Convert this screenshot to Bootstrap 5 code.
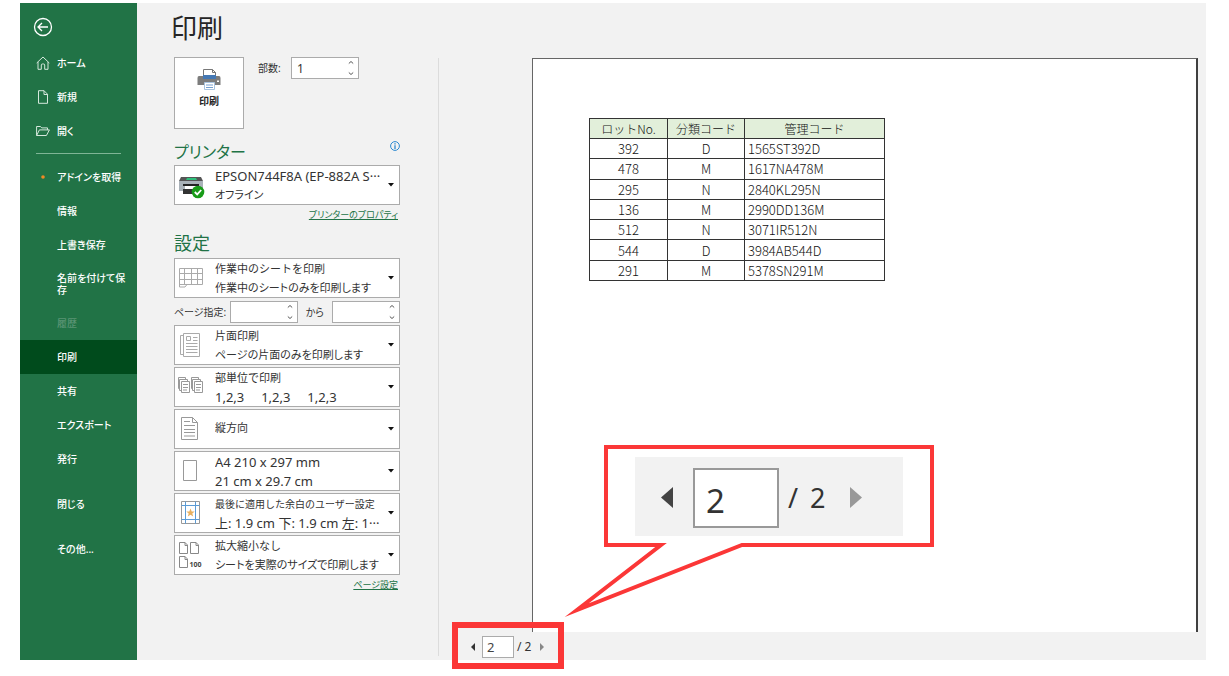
<!DOCTYPE html>
<html lang="ja">
<head>
<meta charset="utf-8">
<meta name="viewport" content="width=device-width, initial-scale=1">
<title>印刷</title>
<link href="https://cdn.jsdelivr.net/npm/bootstrap@5.3.0/dist/css/bootstrap.min.css" rel="stylesheet">
<style>
  :root { --xl-green: #217346; --xl-dark: #004b1c; --xl-pane: #f2f2f2; --xl-line: #ababab; --xl-red: #fb3737; }
  body { min-height: 100vh; padding: 3px 23px 16px 20px; background: #fff; color: #333; font-family: "Noto Sans", "Noto Sans CJK JP", sans-serif; font-size: 11px; line-height: 18px; font-feature-settings: "palt"; }
  .backstage { min-height: calc(100vh - 19px); background: var(--xl-pane); }

  /* left navigation */
  .side { flex: 0 0 117px; background: var(--xl-green); font-size: 10px; line-height: 12px; }
  .back { margin: 14px 0 9px 13px; width: 20px; height: 20px; line-height: 0; }
  .side .nav-link { display: flex; align-items: center; min-height: 34px; padding: 0 8px 0 37px; color: #fff; font-weight: 500; word-break: break-all; }
  .side .nav-link:hover, .side .nav-link.active { background: var(--xl-dark); }
  .side .nav-link.disabled { color: #5a9474; }
  .side .nav-link.has-icon { padding-left: 16px; white-space: nowrap; }
  .side .nav-link.has-icon svg { width: 14px; margin-right: 7px; flex: none; }
  .side .nav-link.two-line { min-height: 44px; }
  .side .apart { margin-top: 11px; }
  .side hr { margin: 5px 16px 6px; border-color: #7fb596; opacity: 1; }

  /* settings column */
  .settings { flex: 0 0 302px; padding: 7px 39px 0 37px; }
  .settings h1 { margin: 0 0 11px -3px; font-size: 26px; line-height: 36px; font-weight: 400; color: #262626; font-feature-settings: normal; }
  .settings h2 { margin: 0; padding-top: 6px; font-size: 18px; line-height: 24px; font-weight: 400; color: var(--xl-green); }
  .settings h2.kana { padding-top: 2px; font-size: 16px; line-height: 26px; }
  .print-btn { width: 70px; height: 72px; padding: 10px 0 0; background: #fff; border: 1px solid var(--xl-line); border-radius: 0; font-size: 10px; line-height: 18px; font-weight: 700; color: #262626; }
  .form-note { font-size: 10px; line-height: 22px; white-space: nowrap; }
  .copies-label { width: 33px; margin-left: 14px; }
  .spin { width: 68px; height: 22px; padding: 0 18px 0 5px; border: 1px solid var(--xl-line); border-radius: 0; color: #333; font-size: 12px; appearance: textfield; -moz-appearance: textfield;
    background: #fff url("data:image/svg+xml,%3Csvg xmlns='http://www.w3.org/2000/svg' width='6' height='16' fill='none' stroke='%23555'%3E%3Cpath d='M.8 3.5 3 1.5 5.200 3.500M.8 12.500 3 14.500 5.200 12.500'/%3E%3C/svg%3E") no-repeat right 4px center; }
  .spin::-webkit-inner-spin-button { appearance: none; -webkit-appearance: none; }
  .more { padding-right: 2px; text-align: right; }
  .more a { color: var(--xl-green); font-size: 9px; line-height: 20px; }
  .picker { display: grid; grid-template-columns: 40px 1fr; height: 40px; background: #fff; border: 1px solid var(--xl-line); }
  .picker select { grid-area: 1 / 1 / 2 / 3; width: 100%; height: 38px; padding: 1px 14px 19px 40px; border: 0; border-radius: 0; color: #333; line-height: 18px; appearance: none; -webkit-appearance: none; overflow: hidden;
    background: transparent url("data:image/svg+xml,%3Csvg xmlns='http://www.w3.org/2000/svg' width='6' height='4'%3E%3Cpath d='M0 0h6L3 3.500z' fill='%23111'/%3E%3C/svg%3E") no-repeat right 5px center; }
  .picker.single select { padding-top: 0; padding-bottom: 2px; }
  .picker svg { grid-area: 1 / 1; width: 28px; height: 28px; margin-left: 2px; align-self: center; pointer-events: none; }
  .picker span { grid-area: 1 / 2; align-self: end; white-space: pre; pointer-events: none; }
  .picker .latin { font-size: 13px; }
  .picker .dense { font-size: 10px; }
  .pickers { gap: 2px; padding-top: 3px; }
  .range { padding-top: 1px; }

  /* preview column */
  .preview { min-width: 0; position: relative; padding: 55px 8px 0 93px; }
  .preview::before { content: ""; position: absolute; left: -1px; top: 55px; bottom: 4px; border-left: 1px solid #dcdcdc; }
  .sheet { background: #fff; border: solid #666; border-width: 1px 2px 0 1px; border-right-color: #404040; padding: 59px 0 0 56px; }
  .lots { width: 296px; height: 163px; table-layout: fixed; border-collapse: collapse; font-family: "Noto Sans CJK JP", sans-serif; font-size: 13px; line-height: 18px; font-weight: 300; color: #111; font-feature-settings: normal; }
  .lots th, .lots td { border: 1px solid #333; padding: 1px 3px 0; text-align: center; white-space: nowrap; }
  .lots th { background: #e2efda; font-size: 12px; font-weight: 300; }
  .lots td:last-child { text-align: left; }
  .pager { height: 28px; margin-left: -62px; width: 75px; padding-top: 2px; position: relative; font-size: 12px; }
  .pager::after { content: ""; position: absolute; inset: -10px -19px -9px -18px; border: 6px solid var(--xl-red); pointer-events: none; }
  .pager button, .zoomed button { padding: 0; border: 0; background: none; line-height: 0; }
  .pager input { width: 32px; height: 22px; margin: 0 3px 0 6px; padding: 0 4px; border: 1px solid var(--xl-line); font-size: 13px; color: #444; }
  .callout { position: absolute; left: 125px; bottom: 43px; width: 370px; height: 172px; }
  .callout > svg { position: absolute; inset: 0; }
  .zoomed { position: relative; margin: 12px 31px 0 71px; height: 79px; padding: 3px 0 0 26px; background: var(--xl-pane); font-size: 27px; line-height: 40px; }
  .zoomed input { width: 86px; height: 60px; margin: 0 9px 0 20px; padding: 4px 11px 0; border: 2px solid #999; font-size: 33px; color: #333; }
</style>
</head>
<body>
<div class="backstage d-flex">

  <nav class="side nav flex-column flex-nowrap" aria-label="ファイル">
    <button class="back btn p-0 border-0" type="button" aria-label="戻る">
      <svg width="20" height="20" viewBox="0 0 20 20" fill="none" stroke="#fff" stroke-width="1.3"><circle cx="10" cy="10" r="8.500"/><path d="M15 10H5.500M9 6l-4 4 4 4"/></svg>
    </button>
    <a class="nav-link has-icon" href="#"><svg height="14" viewBox="0 0 14 14" fill="none" stroke="#d5e8dc"><path d="M.7 7 7 1l6.300 6M2 6v7.300h3.300V9q0-1 1-1h1.400q1 0 1 1v4.300H12V6"/></svg>ホーム</a>
    <a class="nav-link has-icon" href="#"><svg height="14" viewBox="0 0 14 14" fill="none" stroke="#d5e8dc"><path d="M2.500.7H8L11.500 4.200v9.100h-9zM8 .7v3.800h3.500"/></svg>新規</a>
    <a class="nav-link has-icon" href="#"><svg height="14" viewBox="0 0 14 14" fill="none" stroke="#d5e8dc"><path d="M.6 11.500v-9h3.900l1.200 1.400h5.800v2M.6 11.500l2.800-5.600h10l-3 5.600z"/></svg>開く</a>
    <hr>
    <a class="nav-link has-icon" href="#"><svg height="14" viewBox="0 0 14 14"><circle cx="7" cy="7" r="1.800" fill="#f08a24"/></svg>アドインを取得</a>
    <a class="nav-link" href="#">情報</a>
    <a class="nav-link" href="#">上書き保存</a>
    <a class="nav-link two-line" href="#">名前を付けて保存</a>
    <a class="nav-link disabled" href="#" aria-disabled="true">履歴</a>
    <a class="nav-link active" href="#" aria-current="page">印刷</a>
    <a class="nav-link" href="#">共有</a>
    <a class="nav-link" href="#">エクスポート</a>
    <a class="nav-link" href="#">発行</a>
    <a class="nav-link apart" href="#">閉じる</a>
    <a class="nav-link apart" href="#">その他...</a>
  </nav>

  <main class="settings">
    <h1>印刷</h1>
    <div class="d-flex align-items-start">
      <button class="print-btn btn d-flex flex-column align-items-center" type="button">
        <svg width="24" height="24" viewBox="0 0 24 24"><path d="M6.500 10V1.500h9l3 3V10" fill="#fff" stroke="#777"/><path d="M15.500 1.500v3h3" fill="none" stroke="#777"/><path d="M6 7h13v4H6z" fill="#4478b4"/><path d="M2 8h4v3h13V8h3q1.500 0 1.500 2v7H.5v-7q0-2 1.500-2z" fill="#7c7c7c"/><path d="M20 12.500h2V14h-2z" fill="#fff"/><path d="M7.500 14.500h10v7h-10z" fill="#fff" stroke="#a9c4e0"/><path d="M9 17h7M9 19.500h7" stroke="#76a0d0"/></svg>
        印刷
      </button>
      <label class="form-note copies-label" for="copies">部数:</label>
      <input class="spin" id="copies" type="number" value="1">
    </div>

    <div class="d-flex justify-content-between mt-2">
      <h2 class="kana">プリンター</h2>
      <svg class="mt-1" width="10" height="10" viewBox="0 0 10 10" fill="none" stroke="#2b88d0"><circle cx="5" cy="5" r="4.400"/><path d="M5 4.300V8M5 2.200v1.200" stroke-width="1.300"/></svg>
    </div>
    <div class="picker">
      <select class="latin" aria-label="プリンター" aria-describedby="d0"><option>EPSON744F8A (EP-882A S···</option></select>
      <svg viewBox="0 0 28 28"><path d="M4 6h20l2 4H2z" fill="#555"/><path d="M10 7h9l1 2H9z" fill="#2fc07c"/><path d="M2 10h24v10H2z" fill="#a9b1b8"/><path d="M6 13h16v2H6z" fill="#222"/><path d="M8 15h12v3H8z" fill="#fff"/><path d="M6 18h14l2 5H6z" fill="#333"/><circle cx="21" cy="21" r="6.300" fill="#189b18"/><path d="m17.800 21 2.400 2.400 4-4.400" fill="none" stroke="#fff" stroke-width="1.800"/></svg>
      <span id="d0">オフライン</span>
    </div>
    <div class="more"><a href="#">プリンターのプロパティ</a></div>

    <h2>設定</h2>
    <div class="pickers d-flex flex-column">
      <div class="picker">
        <select aria-label="印刷対象" aria-describedby="d1"><option>作業中のシートを印刷</option></select>
        <svg viewBox="0 0 28 28" fill="none" stroke="#aaa"><path d="M2.500 4.500h23v16H10l-2 2.500H2.500zM2.500 9.500h23M2.500 15.500h23M7.500 4.500v16M14.500 4.500v16M20.500 4.500v16M2.500 20.500H10"/></svg>
        <span id="d1">作業中のシートのみを印刷します</span>
      </div>
      <div class="range form-note d-flex justify-content-between">
        <label for="from">ページ指定:</label>
        <div class="d-flex gap-2"><input class="spin" id="from" type="number"><label for="to">から</label><input class="spin" id="to" type="number"></div>
      </div>
      <div class="picker">
        <select aria-label="片面・両面" aria-describedby="d2"><option>片面印刷</option></select>
        <svg viewBox="0 0 28 28" fill="none" stroke="#aaa"><path d="M6.500 2.500h16v23h-16zM6 4.500H3.500v19h3M9.500 5.500h4v4h-4zM16 6.500h4.500M16 9.500h4.500M9 12.500h11.500M9 15.500h11.500M9 18.500h11.500M9 21.500h11.500"/></svg>
        <span id="d2">ページの片面のみを印刷します</span>
      </div>
      <div class="picker">
        <select aria-label="部単位" aria-describedby="d3"><option>部単位で印刷</option></select>
        <svg viewBox="0 0 28 28" fill="none" stroke="#999"><path d="M4.500 8.500h8v11h-8zM4 17.500H2.500v-11h8v1.500M2.500 15.500h-1v-11h7v1.500M6 11.500h5M6 14.500h5M6 17h4M17.500 8.500h8v11h-8zM17 17.500h-1.500v-11h8v1.500M15.500 15.500h-1v-11h7v1.500M19 11.500h5M19 14.500h5M19 17h4"/></svg>
        <span class="latin" id="d3">1,2,3     1,2,3     1,2,3</span>
      </div>
      <div class="picker single">
        <select aria-label="印刷の向き"><option>縦方向</option></select>
        <svg viewBox="0 0 28 28" fill="none" stroke="#999"><path d="M4.500 2.500h11l5 5v17h-16zM15.500 2.500v5h5M7 6.500h6M7 10.500h11M7 14.500h11M7 17.500h11M7 21h11"/></svg>
      </div>
      <div class="picker">
        <select class="latin" aria-label="用紙サイズ" aria-describedby="d5"><option>A4 210 x 297 mm</option></select>
        <svg viewBox="0 0 28 28" fill="none" stroke="#999"><path d="M6.500 3.500h13v20h-13z"/></svg>
        <span class="latin" id="d5">21 cm x 29.7 cm</span>
      </div>
      <div class="picker">
        <select class="dense" aria-label="余白" aria-describedby="d6"><option>最後に適用した余白のユーザー設定</option></select>
        <svg viewBox="0 0 28 28" fill="none"><path d="M4.500 2.500h18v22h-18z" stroke="#999"/><path d="M8.500 2.500v22M18.500 2.500v22M4.500 6.500h18M4.500 20.500h18" stroke="#5b9bd5"/><path d="m13.500 9.500 1.200 3h3l-2.400 1.900.9 3.100-2.700-1.800-2.700 1.800.9-3.100-2.400-1.900h3z" fill="#e8b060"/></svg>
        <span class="latin" id="d6">上: 1.9 cm 下: 1.9 cm 左: 1···</span>
      </div>
      <div class="picker">
        <select aria-label="拡大縮小" aria-describedby="d7"><option>拡大縮小なし</option></select>
        <svg viewBox="0 0 28 28" fill="none" stroke="#888"><path d="M2.500 1.500H8l2.500 2.500v8.500h-8zM8 1.500V4.500h2.500M13.500 1.500H19l2.500 2.500v8.500h-8zM19 1.500V4.500h2.500M2.500 15.500H8l2.500 2.500v8.500h-8zM8 15.500V18.500h2.500"/><text x="12.500" y="26" font-size="7" font-weight="700" fill="#444" stroke="none">100</text></svg>
        <span id="d7">シートを実際のサイズで印刷します</span>
      </div>
    </div>
    <div class="more"><a href="#">ページ設定</a></div>
  </main>

  <section class="preview flex-grow-1 d-flex flex-column" aria-label="プレビュー">
    <div class="sheet flex-grow-1">
      <table class="lots">
        <colgroup><col style="width:78px"><col style="width:77px"><col></colgroup>
        <thead><tr><th>ロットNo.</th><th>分類コード</th><th>管理コード</th></tr></thead>
        <tbody>
          <tr><td>392</td><td>D</td><td>1565ST392D</td></tr>
          <tr><td>478</td><td>M</td><td>1617NA478M</td></tr>
          <tr><td>295</td><td>N</td><td>2840KL295N</td></tr>
          <tr><td>136</td><td>M</td><td>2990DD136M</td></tr>
          <tr><td>512</td><td>N</td><td>3071IR512N</td></tr>
          <tr><td>544</td><td>D</td><td>3984AB544D</td></tr>
          <tr><td>291</td><td>M</td><td>5378SN291M</td></tr>
        </tbody>
      </table>
    </div>
    <div class="pager d-flex align-items-center">
      <button type="button" aria-label="前のページ"><svg width="6" height="10"><path d="M5 1v8L1 5z" fill="#333"/></svg></button>
      <input type="text" value="2" aria-label="ページ">
      <span class="text-nowrap">/ 2</span>
      <button class="ms-2" type="button" aria-label="次のページ"><svg width="6" height="10"><path d="M1 1v8l4-4z" fill="#888"/></svg></button>
    </div>

    <div class="callout">
      <svg width="370" height="172" viewBox="0 0 370 172" fill="#fff" stroke="#fb3737" stroke-width="4" stroke-miterlimit="12"><path d="M178 100H368V2H42V100H97L13 165z"/></svg>
      <div class="zoomed d-flex align-items-center">
        <button type="button" aria-label="前のページ"><svg width="12" height="22"><path d="M12 0v21L0 10.500z" fill="#444"/></svg></button>
        <input type="text" value="2" aria-label="ページ">
        <span class="d-flex gap-2"><span>/</span><span class="ps-1">2</span></span>
        <button class="ms-4" type="button" aria-label="次のページ"><svg width="12" height="22"><path d="M0 0v21l12-10.500z" fill="#999"/></svg></button>
      </div>
    </div>
  </section>
</div>
<script src="https://cdn.jsdelivr.net/npm/bootstrap@5.3.0/dist/js/bootstrap.bundle.min.js"></script>
</body>
</html>
